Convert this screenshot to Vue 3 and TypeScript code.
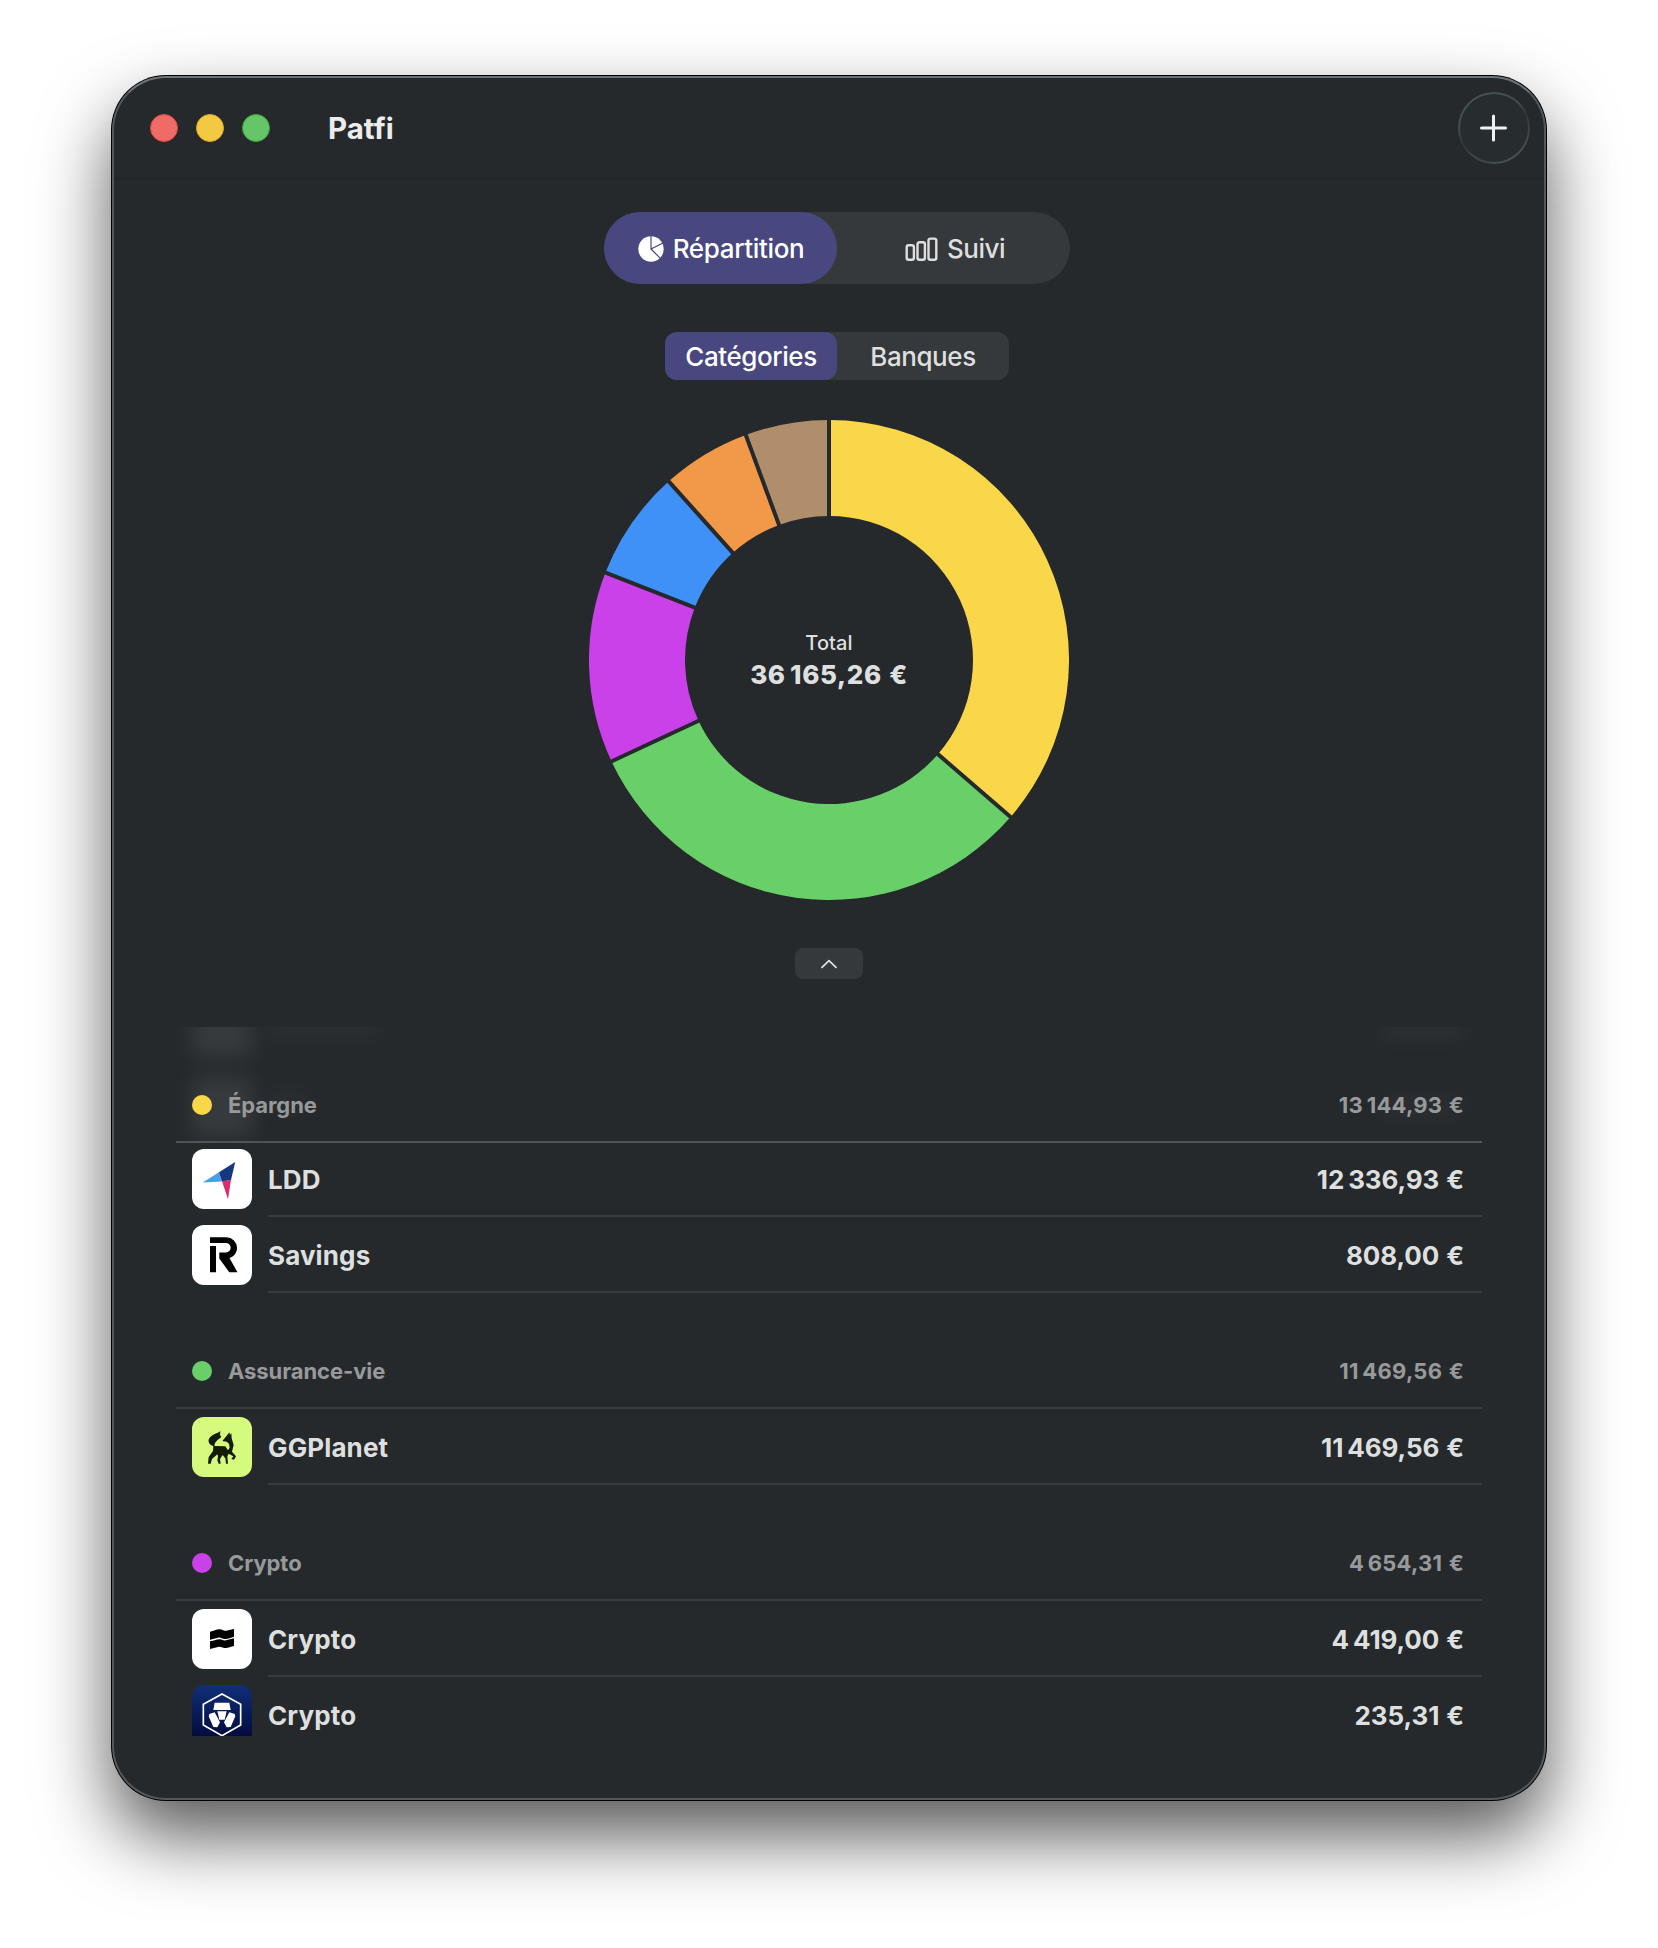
<script setup lang="ts">
interface Slice { color: string; start: number; end: number }
interface Account { name: string; amount: string; logo: string }
interface Group { name: string; amount: string; color: string; accounts: Account[] }

const slices: Slice[] = [
  { color: '#f9d749', start: 0, end: 130.85 },
  { color: '#69d069', start: 130.85, end: 245.02 },
  { color: '#ca41ea', start: 245.02, end: 291.35 },
  { color: '#3f90f7', start: 291.35, end: 318.1 },
  { color: '#f29849', start: 318.1, end: 339.7 },
  { color: '#b08d6b', start: 339.7, end: 360 },
]

const point = (r: number, deg: number): string => {
  const a = ((deg - 90) * Math.PI) / 180
  return `${(240 + r * Math.cos(a)).toFixed(2)} ${(240 + r * Math.sin(a)).toFixed(2)}`
}

const sector = (s: Slice): string => {
  const large = s.end - s.start > 180 ? 1 : 0
  return `M${point(240, s.start)}A240 240 0 ${large} 1 ${point(240, s.end)}L${point(144, s.end)}A144 144 0 ${large} 0 ${point(144, s.start)}Z`
}

const groups: Group[] = [
  {
    name: 'Épargne', amount: '13\u2009144,93\u00a0€', color: '#f9d749',
    accounts: [
      { name: 'LDD', amount: '12\u2009336,93\u00a0€', logo: 'arrow' },
      { name: 'Savings', amount: '808,00\u00a0€', logo: 'r' },
    ],
  },
  {
    name: 'Assurance-vie', amount: '11\u2009469,56\u00a0€', color: '#69d069',
    accounts: [{ name: 'GGPlanet', amount: '11\u2009469,56\u00a0€', logo: 'fox' }],
  },
  {
    name: 'Crypto', amount: '4\u2009654,31\u00a0€', color: '#ca41ea',
    accounts: [
      { name: 'Crypto', amount: '4\u2009419,00\u00a0€', logo: 'waves' },
      { name: 'Crypto', amount: '235,31\u00a0€', logo: 'hexagon' },
    ],
  },
]
</script>

<template>
  <div class="stage">
    <main class="window">
      <header class="titlebar">
        <div class="lights"><i class="red" /><i class="yellow" /><i class="green" /></div>
        <h1>Patfi</h1>
        <button class="add" aria-label="Ajouter">
          <svg width="28" height="28" viewBox="0 0 28 28"><path d="M13.5 2V26M1.5 14H25.5" stroke="#f1f1f1" stroke-width="3" stroke-linecap="round" /></svg>
        </button>
      </header>

      <nav class="tabs">
        <button class="tab active">
          <svg width="26" height="26" viewBox="0 0 26 26">
            <circle cx="13" cy="13" r="12.7" fill="#fff" />
            <path d="M13 0V13L25 7M13 13L22.2 22.2" fill="none" stroke="#48477f" stroke-width="1.2" />
          </svg>
          <span>Répartition</span>
        </button>
        <button class="tab second">
          <svg width="33" height="24" viewBox="0 0 33 24" fill="none" stroke="#dedfdf" stroke-width="2.4">
            <rect x="1.7" y="8.2" width="7.2" height="14.6" rx="2" />
            <rect x="12.5" y="5.2" width="7.4" height="17.6" rx="2" />
            <rect x="23.5" y="1.6" width="7.8" height="21.2" rx="2" />
          </svg>
          <span>Suivi</span>
        </button>
      </nav>

      <nav class="segments">
        <button class="segment active">Catégories</button>
        <button class="segment">Banques</button>
      </nav>

      <section class="chart">
        <svg width="480" height="480" viewBox="0 0 480 480">
          <path v-for="s in slices" :key="s.color" :d="sector(s)" :fill="s.color" />
          <path v-for="s in slices" :key="s.start" :d="`M${point(142, s.start)}L${point(242, s.start)}`" stroke="#25292c" stroke-width="4" />
        </svg>
        <div class="total">
          <span class="total-label">Total</span>
          <strong>36&#x2009;165,26&nbsp;€</strong>
        </div>
      </section>

      <button class="collapse" aria-label="Replier">
        <svg width="18" height="10" viewBox="0 0 18 10"><path d="M2 8.4L9 1.6L16 8.4" fill="none" stroke="#dfe0e0" stroke-width="1.8" stroke-linecap="round" stroke-linejoin="round" /></svg>
      </button>

      <section class="list">
        <div class="ghosts">
          <i class="ghost tile-a" /><i class="ghost tile-b" /><i class="ghost name-a" /><i class="ghost name-b" /><i class="ghost sum-a" /><i class="ghost sum-b" />
        </div>
        <div v-for="(g, gi) in groups" :key="g.name" class="group" :class="{ pinned: gi === 0 }">
          <div class="group-head">
            <i class="dot" :style="{ background: g.color }" />
            <span>{{ g.name }}</span>
            <span class="sum">{{ g.amount }}</span>
          </div>
          <div v-for="a in g.accounts" :key="a.logo" class="row">
            <div class="logo" :class="a.logo">
              <svg v-if="a.logo === 'arrow'" viewBox="0 0 60 60">
                <path d="M10.7 33.6L27 23.3L30 32.4Z" fill="#479fe4" />
                <path d="M27 23.3L43.2 13L39 31L30 32.4Z" fill="#14387f" />
                <path d="M30 32.2L39 30.8L36 50.3Z" fill="#d72d75" />
              </svg>
              <svg v-else-if="a.logo === 'r'" viewBox="0 0 60 60">
                <path d="M18 12.3H34.5A10.5 10.5 0 0 1 45 22.8C45 28 42 31.5 37.5 33L45.5 47.3H37.3L27.3 33.5V27.5H34A4.7 4.7 0 0 0 38.7 22.8A4.7 4.7 0 0 0 34 18H18Z" />
                <path d="M18 21H24V47.3H18Z" />
              </svg>
              <svg v-else-if="a.logo === 'fox'" viewBox="0 0 180 180" fill="#141b06">
                <path d="M86 42C76 50 56 52 50 68C48 78 56 86 68 88C66 76 76 70 88 60C82 54 84 48 86 42Z" />
                <path d="M112 46L104 56L91 72L104 74L111 80L113 92L108 100L100 88L64 87L63 102L50 120L48 140H56L60 126L76 112L78 118L76 130L80 140H86L84 126L92 114L100 124L102 140H108L106 118L110 110L124 118L118 126L126 128L132 118L120 104L125 84L119 64L118 48L114 54Z" />
              </svg>
              <svg v-else-if="a.logo === 'waves'" viewBox="0 0 180 180">
                <path d="M54 68C66 67 74 60 84 61C92 62 94 67 102 65L126 60V83C116 85 108 91 98 90C90 89 86 84 78 86L54 92Z" />
                <path d="M54 97C66 96 74 90 84 91C92 92 94 96 102 94L126 88V111C116 112 108 118 98 117C90 116 86 112 78 114L54 120Z" />
              </svg>
              <svg v-else viewBox="0 0 180 180">
                <path d="M90 27L146 58V120L90 152L34 120V58Z" fill="none" stroke="#fff" stroke-width="5" />
                <path d="M68 53H112L116 75H64ZM76 79H104L98 104H82ZM52 87L68 82L84 112L76 127L64 126L50 94ZM128 87L112 82L96 112L104 127L116 126L130 94Z" fill="#fff" />
              </svg>
            </div>
            <div class="row-body">
              <span>{{ a.name }}</span>
              <span class="amount">{{ a.amount }}</span>
            </div>
          </div>
        </div>
      </section>
    </main>
  </div>
</template>

<style>
body { margin: 0; background: #fff; }
</style>

<style scoped>
.stage {
  box-sizing: border-box;
  width: 1658px;
  height: 1948px;
  padding: 76px 112px;
  overflow: hidden;
  background: #fff;
  font-family: Inter, "Liberation Sans", sans-serif;
  color: #dedfdf;
}
button { border: 0; padding: 0; margin: 0; background: none; font: inherit; color: inherit; }
svg { display: block; flex: none; }
.window {
  box-sizing: border-box;
  width: 1434px;
  height: 1724px;
  display: flex;
  flex-direction: column;
  align-items: center;
  border: 2px solid #55585a;
  border-top-color: #6f7374;
  border-radius: 54px;
  background: #25292c;
  box-shadow: 0 0 0 1px #000, 0 36px 72px rgba(0, 0, 0, 0.66);
  overflow: hidden;
}
.titlebar {
  box-sizing: border-box;
  width: 100%;
  height: 102px;
  flex: none;
  display: flex;
  align-items: center;
  padding: 0 14px 0 36px;
  border-bottom: 2px solid #232424;
}
.lights { display: flex; gap: 18px; }
.lights i { box-sizing: border-box; width: 28px; height: 28px; border-radius: 50%; border: 1px solid; }
.lights .red { background: #f06a68; border-color: #dd4a46; }
.lights .yellow { background: #f3c944; border-color: #dba92a; }
.lights .green { background: #66c566; border-color: #3aa93b; }
h1 { margin: 0 auto 0 58px; font-size: 29.5px; font-weight: 700; letter-spacing: 0; color: #ececec; }
.add {
  box-sizing: border-box;
  width: 72px;
  height: 72px;
  display: flex;
  align-items: center;
  justify-content: center;
  border-radius: 50%;
  border: 2px solid transparent;
  background: linear-gradient(#272c2f, #272c2f) padding-box, linear-gradient(155deg, #465056 10%, #434c51 35%, #2f3437 52%, #3a4246 65%, #4a5358 90%) border-box;
}
.tabs { display: flex; flex: none; width: 466px; height: 72px; margin: 32px 0 0 16px; border-radius: 36px; background: #36393c; }
.tab { box-sizing: border-box; display: flex; align-items: center; justify-content: center; gap: 9px; width: 233px; height: 72px; border-radius: 36px; letter-spacing: -0.35px; }
.tab svg { margin-top: 2px; }
.tab.active { padding-left: 1px; }
.tab.second { padding-left: 3px; letter-spacing: -0.5px; }
.segments { display: flex; flex: none; width: 344px; height: 48px; margin: 48px 0 0 16px; border-radius: 12px; background: #36393c; }
.segment { width: 172px; height: 48px; border-radius: 12px; letter-spacing: -0.42px; }
.tab, .segment { font-size: 26px; font-weight: 500; }
.active { background: #48477f; color: #fff; }
.chart { position: relative; width: 480px; height: 480px; margin-top: 40px; flex: none; }
.total { position: absolute; inset: 4px 0 0; display: flex; flex-direction: column; align-items: center; justify-content: center; }
.total-label { font-size: 20px; line-height: 26px; font-weight: 500; letter-spacing: 0.1px; }
.total strong { font-size: 26px; line-height: 38px; font-weight: 850; letter-spacing: 0.6px; word-spacing: 1.2px; }
.collapse { display: flex; align-items: center; justify-content: center; flex: none; width: 68px; height: 31px; margin-top: 48px; border-radius: 8px; background: #36393c; }
.list { position: relative; width: 1306px; height: 709px; margin-top: 48px; flex: none; overflow: hidden; }
.ghosts { position: absolute; inset: 0 0 auto; height: 114px; overflow: hidden; }
.ghost { position: absolute; background: #fff; filter: blur(10px); }
.tile-a { left: 16px; top: -30px; width: 60px; height: 60px; opacity: 0.08; }
.tile-b { left: 16px; top: 50px; width: 60px; height: 60px; opacity: 0.08; }
.name-a { left: 92px; top: -8px; width: 110px; height: 16px; opacity: 0.04; }
.name-b { left: 92px; top: 66px; width: 40px; height: 18px; opacity: 0.03; }
.sum-a { right: 20px; top: -6px; width: 80px; height: 18px; opacity: 0.04; }
.sum-b { right: 20px; top: 70px; width: 80px; height: 18px; opacity: 0.03; }
.group-head {
  position: relative;
  box-sizing: border-box;
  display: flex;
  align-items: center;
  height: 116px;
  padding: 42px 18px 0 16px;
  border-bottom: 2px solid #3a3d40;
  font-size: 22px;
  font-weight: 700;
  letter-spacing: -0.08px;
  color: #98999a;
}
.pinned .group-head { margin-bottom: -2px; border-color: #505457; }
.dot { width: 20px; height: 20px; margin-right: 16px; border-radius: 50%; }
.sum, .amount { margin-left: auto; }
.sum { letter-spacing: 0.25px; word-spacing: 1px; }
.row { position: relative; display: flex; height: 76px; padding-left: 16px; }
.logo { width: 60px; height: 60px; margin: 8px 16px 0 0; border-radius: 12px; background: #fff; overflow: hidden; flex: none; }
.logo svg { width: 60px; height: 60px; }
.logo.fox { background: #d5fa7e; }
.logo.hexagon { background: linear-gradient(#102f78, #010a3c 90%); }
.row-body { box-sizing: border-box; flex: 1; display: flex; align-items: center; padding: 2px 18px 0 0; border-bottom: 2px solid #3a3d40; font-size: 26px; font-weight: 700; letter-spacing: 0.12px; }
.amount { letter-spacing: -0.1px; word-spacing: 1px; }
</style>
